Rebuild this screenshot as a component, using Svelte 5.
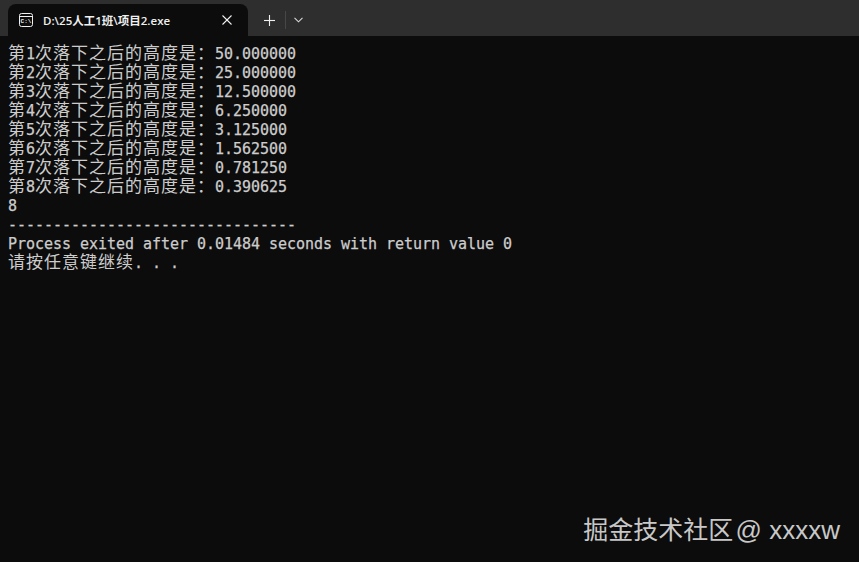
<script>
	const lines = [
		'第1次落下之后的高度是：50.000000',
		'第2次落下之后的高度是：25.000000',
		'第3次落下之后的高度是：12.500000',
		'第4次落下之后的高度是：6.250000',
		'第5次落下之后的高度是：3.125000',
		'第6次落下之后的高度是：1.562500',
		'第7次落下之后的高度是：0.781250',
		'第8次落下之后的高度是：0.390625',
		'8',
		'--------------------------------',
		'Process exited after 0.01484 seconds with return value 0',
		'请按任意键继续. . .'
	];

	// wide glyphs take two console cells, so they get their own run
	function runs(text) {
		return text.match(/[\u3000-\u9fff\uff00-\uffef]+|[^\u3000-\u9fff\uff00-\uffef]+/g) ?? [];
	}

	function isWide(run) {
		return /[\u3000-\u9fff\uff00-\uffef]/.test(run);
	}
</script>

<div class="window">
	<header class="titlebar">
		<div class="tab">
			<svg class="tab-icon" viewBox="0 0 16 16" fill="none" stroke="currentColor" stroke-width="1">
				<rect x="1.5" y="1.5" width="13" height="13" rx="2"></rect>
				<line x1="1.5" y1="4.5" x2="14.5" y2="4.5"></line>
				<text x="8" y="11.4" text-anchor="middle" class="icon-text">C:\</text>
			</svg>
			<span class="tab-title">D:\25人工1班\项目2.exe</span>
			<svg class="tab-close" viewBox="0 0 10 10" fill="none" stroke="currentColor" stroke-width="1.1">
				<line x1="0.5" y1="0.5" x2="9.5" y2="9.5"></line>
				<line x1="9.5" y1="0.5" x2="0.5" y2="9.5"></line>
			</svg>
		</div>
		<svg class="plus" viewBox="0 0 11 11" fill="none" stroke="currentColor" stroke-width="1.1">
			<line x1="5.5" y1="0" x2="5.5" y2="11"></line>
			<line x1="0" y1="5.5" x2="11" y2="5.5"></line>
		</svg>
		<span class="divider"></span>
		<svg class="chevron" viewBox="0 0 9 6" fill="none" stroke="currentColor" stroke-width="1.1">
			<polyline points="0.5,0.8 4.5,4.8 8.5,0.8"></polyline>
		</svg>
	</header>

	<main class="console">
		{#each lines as line}
			<div class="line">
				{#each runs(line) as run}
					<span class:wide={isWide(run)}>{run}</span>
				{/each}
			</div>
		{/each}
	</main>

	<div class="watermark"><span class="watermark-cjk">掘金技术社区</span> @ xxxxw</div>
</div>

<style>
	:global(body) {
		background: #0c0c0c;
	}

	.window {
		position: relative;
		width: 859px;
		height: 562px;
		overflow: hidden;
		background: #0c0c0c;
		display: flex;
		flex-direction: column;
	}

	.titlebar {
		height: 36px;
		box-sizing: border-box;
		padding: 4px 0 0 8px;
		background: #2e2e2e;
		display: flex;
		align-items: stretch;
		color: #f0f0f0;
	}

	.tab {
		width: 240px;
		box-sizing: border-box;
		padding: 0 16px 0 10px;
		background: #0c0c0c;
		border-radius: 8px 8px 0 0;
		display: flex;
		align-items: center;
	}

	.tab-icon {
		width: 16px;
		height: 16px;
		flex: none;
	}

	.icon-text {
		font-family: 'Liberation Mono', monospace;
		font-size: 6px;
		font-weight: 700;
		fill: currentColor;
		stroke: none;
	}

	.tab-title {
		margin-left: 9px;
		flex: 1;
		font-family: 'Open Sans', 'Noto Sans CJK SC', sans-serif;
		font-size: 11.5px;
		font-weight: 600;
		white-space: nowrap;
	}

	.tab-close {
		width: 10px;
		height: 10px;
		flex: none;
	}

	.plus {
		width: 11px;
		height: 11px;
		flex: none;
		align-self: center;
		margin: 0 0 0 16px;
	}

	.divider {
		width: 1px;
		height: 18px;
		flex: none;
		align-self: center;
		margin-left: 10px;
		background: #474747;
	}

	.chevron {
		width: 9px;
		height: 6px;
		flex: none;
		align-self: center;
		margin-left: 8px;
		color: #d8d8d8;
	}

	.console {
		flex: 1;
		padding: 9px 0 0 8px;
		color: #cccccc;
		font-family: 'DejaVu Sans Mono', 'Liberation Mono', monospace;
		font-size: 15px;
		letter-spacing: -0.03px;
		line-height: 19px;
		-webkit-text-stroke: 0.25px #cccccc;
	}

	.line {
		height: 19px;
		white-space: pre;
	}

	.wide {
		font-family: 'Noto Sans CJK SC', sans-serif;
		font-size: 17px;
		letter-spacing: 1px;
		line-height: 0;
		-webkit-text-stroke: 0;
	}

	.watermark {
		position: absolute;
		right: 19px;
		bottom: 16px;
		color: #c8c8c8;
		font-family: 'Liberation Sans', 'Noto Sans', sans-serif;
		font-size: 26px;
		line-height: 32px;
		white-space: nowrap;
	}

	.watermark-cjk {
		margin-right: -5px;
		font-family: 'Noto Sans CJK SC', sans-serif;
		font-size: 25px;
		line-height: 0;
	}
</style>
